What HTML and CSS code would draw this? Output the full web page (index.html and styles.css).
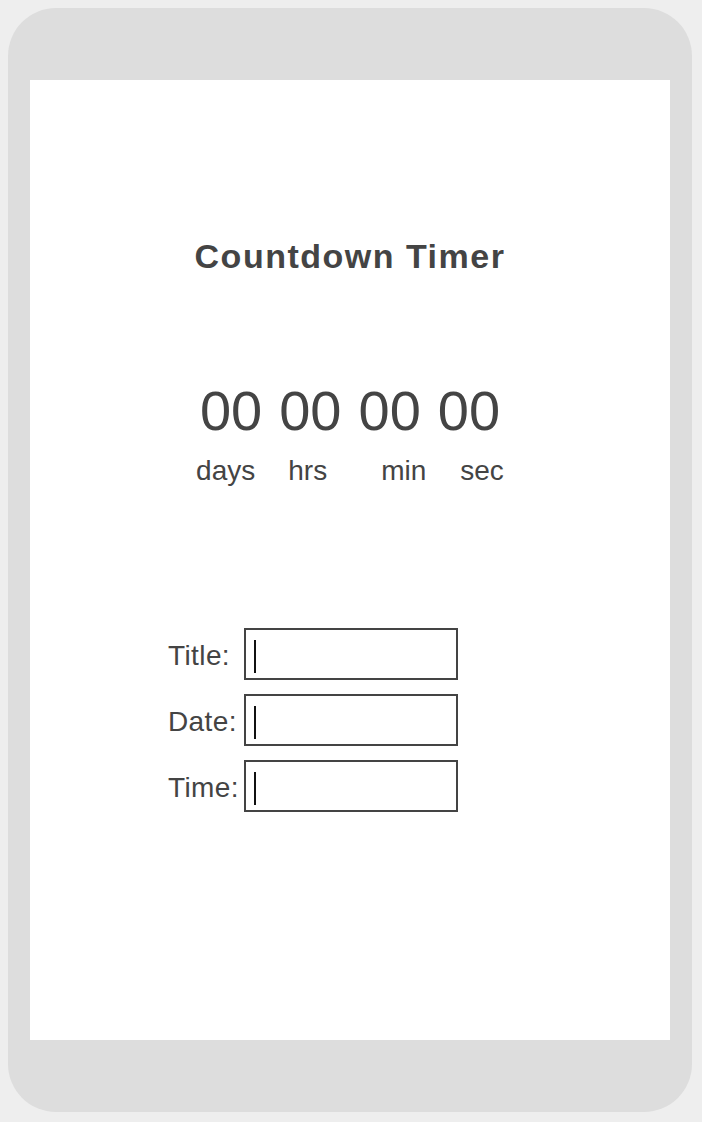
FILE: index.html
```html
<!DOCTYPE html>
<html lang="en">
<head>
<meta charset="utf-8">
<title>Countdown Timer</title>
<link rel="stylesheet" href="styles.css">
</head>
<body>
<div class="phone">
  <main class="screen">
    <h1 class="title">Countdown Timer</h1>
    <div class="digits">
      <span class="pair">00</span>
      <span class="pair">00</span>
      <span class="pair">00</span>
      <span class="pair">00</span>
    </div>
    <div class="units">
      <span class="unit unit-days">days</span>
      <span class="unit unit-hrs">hrs</span>
      <span class="unit unit-min">min</span>
      <span class="unit unit-sec">sec</span>
    </div>
    <form class="form">
      <label class="field-label">Title:</label>
      <div class="field"><span class="caret"></span></div>
      <label class="field-label">Date:</label>
      <div class="field"><span class="caret"></span></div>
      <label class="field-label">Time:</label>
      <div class="field"><span class="caret"></span></div>
    </form>
  </main>
</div>
</body>
</html>
```
FILE: styles.css
```css
html, body {
  margin: 0;
  padding: 0;
}
body {
  background: #eeeeee;
  font-family: "Liberation Sans", Arial, sans-serif;
  color: #444444;
}
.phone {
  box-sizing: border-box;
  margin: 8px;
  width: 684px;
  height: 1104px;
  border-radius: 48px;
  background: #dddddd;
  padding: 72px 22px;
}
.screen {
  width: 640px;
  height: 960px;
  background: #ffffff;
  display: flex;
  flex-direction: column;
  align-items: center;
}
.title {
  margin: 156px 0 0;
  font-size: 34px;
  line-height: 40px;
  font-weight: bold;
  letter-spacing: 1.5px;
  color: #444444;
}
.digits {
  margin-top: 103px;
  display: flex;
  gap: 17px;
  font-size: 56px;
  line-height: 64px;
}
.units {
  margin-top: 12px;
  display: flex;
  font-size: 28px;
  line-height: 32px;
}
.unit-hrs { margin-left: 33px; }
.unit-min { margin-left: 54px; }
.unit-sec { margin-left: 34px; }
.form {
  align-self: flex-start;
  margin: 141px 0 0 138px;
  display: grid;
  grid-template-columns: 76px 214px;
  grid-auto-rows: 52px;
  row-gap: 14px;
}
.field-label {
  font-size: 28px;
  line-height: 32px;
  letter-spacing: 0.4px;
  align-self: center;
  padding-top: 4px;
}
.field {
  box-sizing: border-box;
  border: 2px solid #444444;
  padding: 10px 0 0 8px;
}
.caret {
  display: block;
  width: 2px;
  height: 33px;
  background: #111111;
}
```
